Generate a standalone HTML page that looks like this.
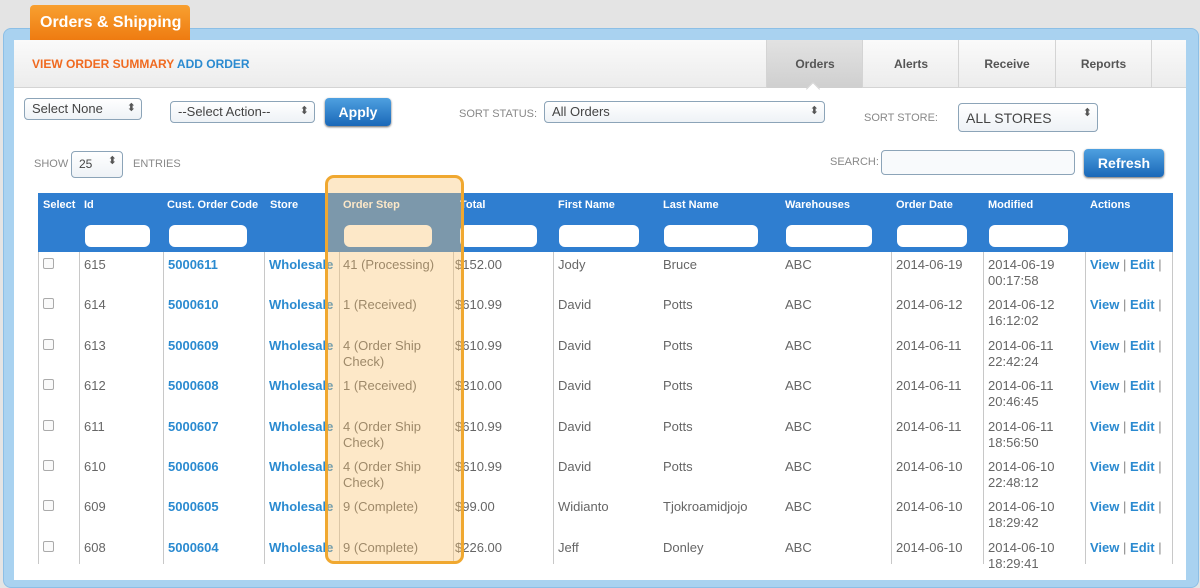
<!DOCTYPE html>
<html><head><style>
*{box-sizing:border-box;margin:0;padding:0}
body{width:1200px;height:564px;overflow:hidden;background:#e4e4e4;font-family:"Liberation Sans",Arial,sans-serif;position:relative;font-size:13px;color:#666}
.a{position:absolute}
.tab{left:30px;top:5px;width:160px;height:36px;background:linear-gradient(#f8a030,#ee7a10);border-radius:4px 4px 0 0;color:#fff;font-weight:bold;font-size:16px;padding:9px 0 0 10px;white-space:nowrap}
.outer{left:3px;top:28px;width:1196px;height:560px;background:#a9d2f0;border-radius:8px;border:1px solid #8cbfe6}
.inner{left:14px;top:40px;width:1172px;height:540px;background:#fff}
.hdr{left:14px;top:40px;width:1172px;height:48px;background:linear-gradient(#fafafa,#ececec);border-bottom:1px solid #d4d4d4}
.nt{top:40px;height:48px;width:97px;border-left:1px solid #d4d4d4;text-align:center;font-weight:bold;font-size:12px;color:#555;padding-top:17px}
.sel{border:1px solid #8ca4b8;border-radius:4px;background:linear-gradient(#fff,#eef2f6);font-size:13px;color:#444;padding:2px 7px;height:22px}
.sel:after{content:"⬍";position:absolute;right:5px;top:2px;font-size:11px;color:#555}
.btn{background:linear-gradient(#4ea0e0,#1a68b8);border-radius:4px;color:#fff;font-weight:bold;font-size:14px;text-align:center;box-shadow:0 1px 2px #666}
.lbl{font-size:11px;color:#888}
.th{top:193px;left:38px;width:1135px;height:59px;background:#2f7ed0}
.hc{top:199px;color:#fff;font-weight:bold;font-size:11px}
.fi{top:225px;height:22px;background:#fff;border-radius:6px}
.row{font-size:13px;color:#666}
.lk{color:#2a8ad0;font-weight:bold}
.vl{top:252px;width:1px;height:312px;background:#c8c8c8}
.cb{width:11px;height:11px;border:1px solid #aaa;border-radius:2px;background:#fafafa}
</style></head><body>
<div class="a outer"></div>
<div class="a inner"></div>
<div class="a tab">Orders &amp; Shipping</div>
<div class="a hdr"></div>
<div class="a" style="left:32px;top:57px;font-size:12px;font-weight:bold"><span style="color:#f06a20">VIEW ORDER SUMMARY</span> <span style="color:#2a8ad0">ADD ORDER</span></div>
<div class="a nt" style="left:766px;background:linear-gradient(#e2e2e2,#cfcfcf)">Orders</div>
<div class="a nt" style="left:862px">Alerts</div>
<div class="a nt" style="left:958px">Receive</div>
<div class="a nt" style="left:1055px;border-right:1px solid #d4d4d4">Reports</div>
<div class="a" style="left:808px;top:84px;width:10px;height:10px;background:#fff;transform:rotate(45deg);border-left:1px solid #d4d4d4;border-top:1px solid #d4d4d4"></div>

<div class="a sel" style="left:24px;top:98px;width:118px">Select None</div>
<div class="a sel" style="left:170px;top:101px;width:145px">--Select Action--</div>
<div class="a btn" style="left:325px;top:98px;width:66px;height:28px;padding-top:6px">Apply</div>
<div class="a lbl" style="left:459px;top:108px">SORT STATUS:</div>
<div class="a sel" style="left:544px;top:101px;width:281px">All Orders</div>
<div class="a lbl" style="left:864px;top:112px">SORT STORE:</div>
<div class="a sel" style="left:958px;top:103px;width:140px;height:29px;padding-top:6px;font-size:14px">ALL STORES</div>
<div class="a lbl" style="left:34px;top:158px">SHOW</div>
<div class="a sel" style="left:71px;top:151px;width:52px;height:27px;padding-top:5px;font-size:12px">25</div>
<div class="a lbl" style="left:133px;top:158px">ENTRIES</div>
<div class="a lbl" style="left:830px;top:156px">SEARCH:</div>
<div class="a" style="left:881px;top:150px;width:194px;height:25px;border:1px solid #8ca4b8;border-radius:4px;background:#f8fafc"></div>
<div class="a btn" style="left:1084px;top:149px;width:80px;height:28px;padding-top:6px">Refresh</div>

<div class="a th"></div>
<div class="a hc" style="left:43px">Select</div>
<div class="a hc" style="left:84px">Id</div>
<div class="a hc" style="left:167px">Cust. Order Code</div>
<div class="a hc" style="left:270px">Store</div>
<div class="a hc" style="left:343px">Order Step</div>
<div class="a hc" style="left:460px">Total</div>
<div class="a hc" style="left:558px">First Name</div>
<div class="a hc" style="left:663px">Last Name</div>
<div class="a hc" style="left:785px">Warehouses</div>
<div class="a hc" style="left:896px">Order Date</div>
<div class="a hc" style="left:988px">Modified</div>
<div class="a hc" style="left:1090px">Actions</div>
<div class="a fi" style="left:85px;width:65px"></div>
<div class="a fi" style="left:169px;width:78px"></div>
<div class="a fi" style="left:344px;width:88px"></div>
<div class="a fi" style="left:460px;width:77px"></div>
<div class="a fi" style="left:559px;width:80px"></div>
<div class="a fi" style="left:664px;width:94px"></div>
<div class="a fi" style="left:786px;width:86px"></div>
<div class="a fi" style="left:897px;width:70px"></div>
<div class="a fi" style="left:989px;width:79px"></div>

<div class="a vl" style="left:38px"></div><div class="a vl" style="left:79px"></div><div class="a vl" style="left:163px"></div><div class="a vl" style="left:264px"></div><div class="a vl" style="left:339px"></div><div class="a vl" style="left:453px"></div><div class="a vl" style="left:553px"></div><div class="a vl" style="left:891px"></div><div class="a vl" style="left:983px"></div><div class="a vl" style="left:1085px"></div><div class="a vl" style="left:1172px"></div>

<div id="rows"></div>
<div class="a" style="left:325px;top:175px;width:139px;height:389px;border:3px solid #f0a830;border-radius:9px;background:rgba(250,195,110,0.38)"></div>
<script>
var d=[["615","5000611","41 (Processing)","$152.00","Jody","Bruce","2014-06-19","00:17:58"],
["614","5000610","1 (Received)","$610.99","David","Potts","2014-06-12","16:12:02"],
["613","5000609","4 (Order Ship<br>Check)","$610.99","David","Potts","2014-06-11","22:42:24"],
["612","5000608","1 (Received)","$310.00","David","Potts","2014-06-11","20:46:45"],
["611","5000607","4 (Order Ship<br>Check)","$610.99","David","Potts","2014-06-11","18:56:50"],
["610","5000606","4 (Order Ship<br>Check)","$610.99","David","Potts","2014-06-10","22:48:12"],
["609","5000605","9 (Complete)","$99.00","Widianto","Tjokroamidjojo","2014-06-10","18:29:42"],
["608","5000604","9 (Complete)","$226.00","Jeff","Donley","2014-06-10","18:29:41"]];
var h="";d.forEach(function(r,i){var y=257+i*40.4;
function c(x,t,cl,ex){h+='<div class="a row '+(cl||"")+'" style="left:'+x+'px;top:'+y+'px;line-height:16px;'+(ex||"")+'">'+t+'</div>';}
h+='<div class="a cb" style="left:43px;top:'+(y+1)+'px"></div>';
c(84,r[0]);c(168,r[1],"lk");c(269,"Wholesale","lk","width:68px;overflow:hidden;white-space:nowrap");c(343,r[2]);c(455,r[3]);c(558,r[4]);c(663,r[5]);c(785,"ABC");c(896,r[6]);c(988,r[6]+"<br>"+r[7]);
c(1090,'View <span style="color:#888;font-weight:normal">|</span> Edit <span style="color:#888;font-weight:normal">|</span>',"lk");});
document.getElementById("rows").innerHTML=h;
</script>
</body></html>
